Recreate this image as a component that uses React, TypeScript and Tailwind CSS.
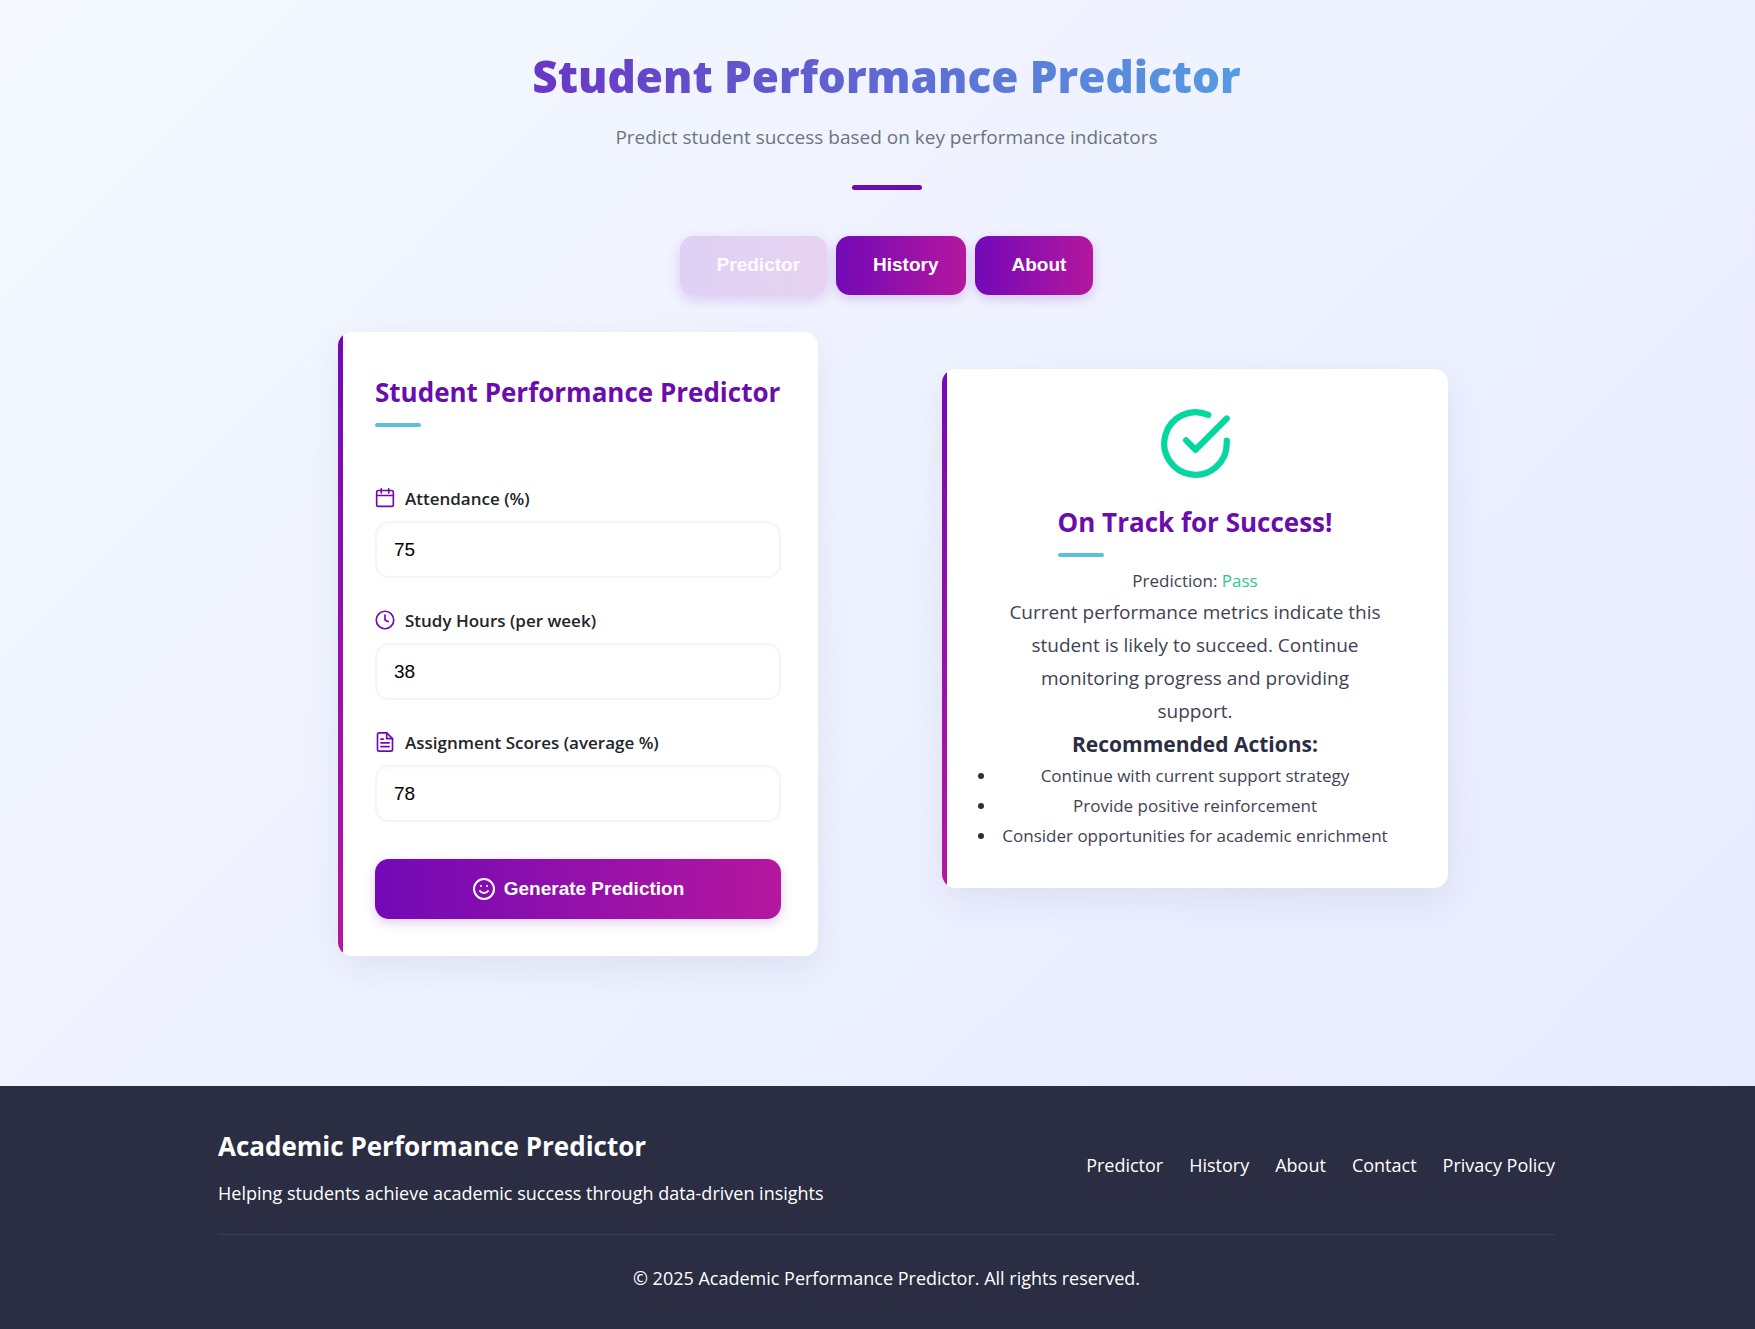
import type { ReactNode } from "react";

const tabs = [
  { label: "Predictor", active: true },
  { label: "History", active: false },
  { label: "About", active: false },
];

const actions = [
  "Continue with current support strategy",
  "Provide positive reinforcement",
  "Consider opportunities for academic enrichment",
];

const links = ["Predictor", "History", "About", "Contact", "Privacy Policy"];

function Icon({ className, children }: { className: string; children: ReactNode }) {
  return (
    <svg
      viewBox="0 0 24 24"
      fill="none"
      stroke="currentColor"
      strokeWidth="2"
      strokeLinecap="round"
      strokeLinejoin="round"
      aria-hidden="true"
      className={className}
    >
      {children}
    </svg>
  );
}

function CalendarIcon() {
  return (
    <Icon className="size-5 shrink-0">
      <rect x="2" y="3" width="20" height="19" rx="2" />
      <path d="M16.500 1v5M7.500 1v5M2 9h20" />
    </Icon>
  );
}

function ClockIcon() {
  return (
    <Icon className="size-5 shrink-0">
      <circle cx="12" cy="12" r="10.500" />
      <path d="M12 6v6l4 2" />
    </Icon>
  );
}

function DocumentIcon() {
  return (
    <Icon className="size-5 shrink-0">
      <path d="M14 1H5a2 2 0 0 0-2 2v18a2 2 0 0 0 2 2h14a2 2 0 0 0 2-2V8z" />
      <path d="M14 1v7h7M17 13H7M17 17.500H7M10 8.500H7" />
    </Icon>
  );
}

function Card({ className, children }: { className: string; children: ReactNode }) {
  return (
    <section
      className={`relative overflow-hidden rounded-[14px] bg-white p-[37px] shadow-[0_12px_36px_rgba(43,45,66,0.08)] ${className}`}
    >
      <span className="absolute inset-y-0 left-0 w-[5px] bg-linear-to-b/srgb from-[#7209b7] to-[#b5179e]" />
      {children}
    </section>
  );
}

function CardTitle({ children }: { children: ReactNode }) {
  return (
    <h2 className="w-fit text-[26px] leading-[46px] font-bold whitespace-nowrap text-[#6a0dad] after:mt-2 after:block after:h-1 after:w-[46px] after:rounded-full after:bg-[#5bc0de]">
      {children}
    </h2>
  );
}

function Field({ id, label, icon, value }: { id: string; label: string; icon: ReactNode; value: number }) {
  return (
    <div>
      <label htmlFor={id} className="mb-2 flex items-center gap-2.5 text-[17px] leading-7 font-semibold text-[#212529]">
        <span className="pb-0.5 text-[#7209b7]">{icon}</span>
        {label}
      </label>
      <input
        id={id}
        type="text"
        inputMode="numeric"
        defaultValue={value}
        className="h-[57px] w-full rounded-[14px] border-2 border-[#f3f5f6] bg-white px-[17px] font-['Liberation_Sans',sans-serif] text-[19px] text-black shadow-[inset_0_2px_4px_rgba(0,0,0,0.02)] outline-none"
      />
    </div>
  );
}

export default function App() {
  return (
    <div className="flex min-h-screen flex-col bg-linear-135/srgb from-[#f5f9ff] to-[#e7e9ff] font-['Open_Sans','Noto_Sans',sans-serif] text-[18px] text-[#2b2d42]">
      <div className="flex-1 pl-[18px]">
        <header className="mx-auto flex max-w-[1337px] flex-col items-center pt-[39px]">
          <h1 className="w-full bg-linear-to-r/srgb from-[#7209b7] to-[#4cc9f0] bg-clip-text text-center text-[44px] leading-[74px] font-extrabold text-transparent">
            Student Performance Predictor
          </h1>
          <p className="mt-2 text-[19px] leading-8 text-[#6c757d]">
            Predict student success based on key performance indicators
          </p>
          <span className="mt-8 h-[5px] w-[70px] rounded-full bg-[#6a0dad]" />
        </header>

        <nav className="mt-[46px] flex justify-center gap-[9px]">
          {tabs.map((tab) => (
            <button
              key={tab.label}
              type="button"
              disabled={tab.active}
              className={`h-[59px] rounded-[14px] pr-[27px] pl-[37px] font-['Liberation_Sans',sans-serif] text-[19px] font-bold ${
                tab.active
                  ? "bg-linear-to-r/srgb from-[#7209b7]/15 to-[#b5179e]/15 text-white/90 shadow-[0_5px_14px_rgba(114,9,183,0.18)]"
                  : "bg-linear-to-r/srgb from-[#7209b7] to-[#b5179e] text-white shadow-[0_4px_12px_rgba(114,9,183,0.2)]"
              }`}
            >
              {tab.label}
            </button>
          ))}
        </nav>

        <main className="mx-auto mt-[37px] grid max-w-[1234px] grid-cols-2 items-start justify-items-center pb-[130px]">
          <Card className="w-[480px]">
            <CardTitle>Student Performance Predictor</CardTitle>
            <form className="mt-[58px] flex flex-col gap-[29px]" onSubmit={(e) => e.preventDefault()}>
              <Field id="attendance" label="Attendance (%)" icon={<CalendarIcon />} value={75} />
              <Field id="hours" label="Study Hours (per week)" icon={<ClockIcon />} value={38} />
              <Field id="scores" label="Assignment Scores (average %)" icon={<DocumentIcon />} value={78} />
              <button
                type="submit"
                className="mt-2 flex h-[60px] w-full items-center justify-center gap-2 rounded-[14px] bg-linear-to-r/srgb from-[#7209b7] to-[#b5179e] font-['Liberation_Sans',sans-serif] text-[19px] font-bold text-white shadow-[0_4px_12px_rgba(114,9,183,0.2)]"
              >
                <Icon className="size-6">
                  <circle cx="12" cy="12" r="10" />
                  <path d="M8 14s1.5 2 4 2 4-2 4-2M9 9h.01M15 9h.01" />
                </Icon>
                Generate Prediction
              </button>
            </form>
          </Card>

          <Card className="mt-[37px] flex w-[506px] flex-col items-center text-center">
            <Icon className="size-[75px] text-[#06d6a0]">
              <path d="M22 11.08V12a10 10 0 1 1-5.93-9.14" />
              <path d="M22 4 12 14.01l-3-3" />
            </Icon>
            <div className="mt-[18px]">
              <CardTitle>On Track for Success!</CardTitle>
            </div>
            <p className="mt-[9px] text-[17px] leading-[30px] text-[#3f4254]">
              Prediction: <span className="text-[#2dc98f]">Pass</span>
            </p>
            <p className="max-w-[380px] text-[19px] leading-[33px] text-[#3f4254]">
              Current performance metrics indicate this student is likely to succeed. Continue monitoring progress and
              providing support.
            </p>
            <h3 className="text-[21px] leading-[33px] font-bold">Recommended Actions:</h3>
            <ul className="w-[396px] list-disc text-[17px] leading-[30px] marker:text-[#2b2d42]">
              {actions.map((action) => (
                <li key={action} className="text-[#3f4254]">
                  {action}
                </li>
              ))}
            </ul>
          </Card>
        </main>
      </div>

      <footer className="bg-[#2b2d42] pl-[18px] text-white">
        <div className="mx-auto max-w-[1337px] pt-9">
          <div className="flex items-center justify-between border-b border-white/8 pb-[26px]">
            <div>
              <h2 className="text-[26px] leading-[48px] font-bold">Academic Performance Predictor</h2>
              <p className="mt-2 leading-[30px]">Helping students achieve academic success through data-driven insights</p>
            </div>
            <nav className="flex gap-[26px]">
              {links.map((link) => (
                <a key={link} href="#">
                  {link}
                </a>
              ))}
            </nav>
          </div>
          <p className="pt-7 pb-9 text-center leading-[30px]">
            © 2025 Academic Performance Predictor. All rights reserved.
          </p>
        </div>
      </footer>
    </div>
  );
}
